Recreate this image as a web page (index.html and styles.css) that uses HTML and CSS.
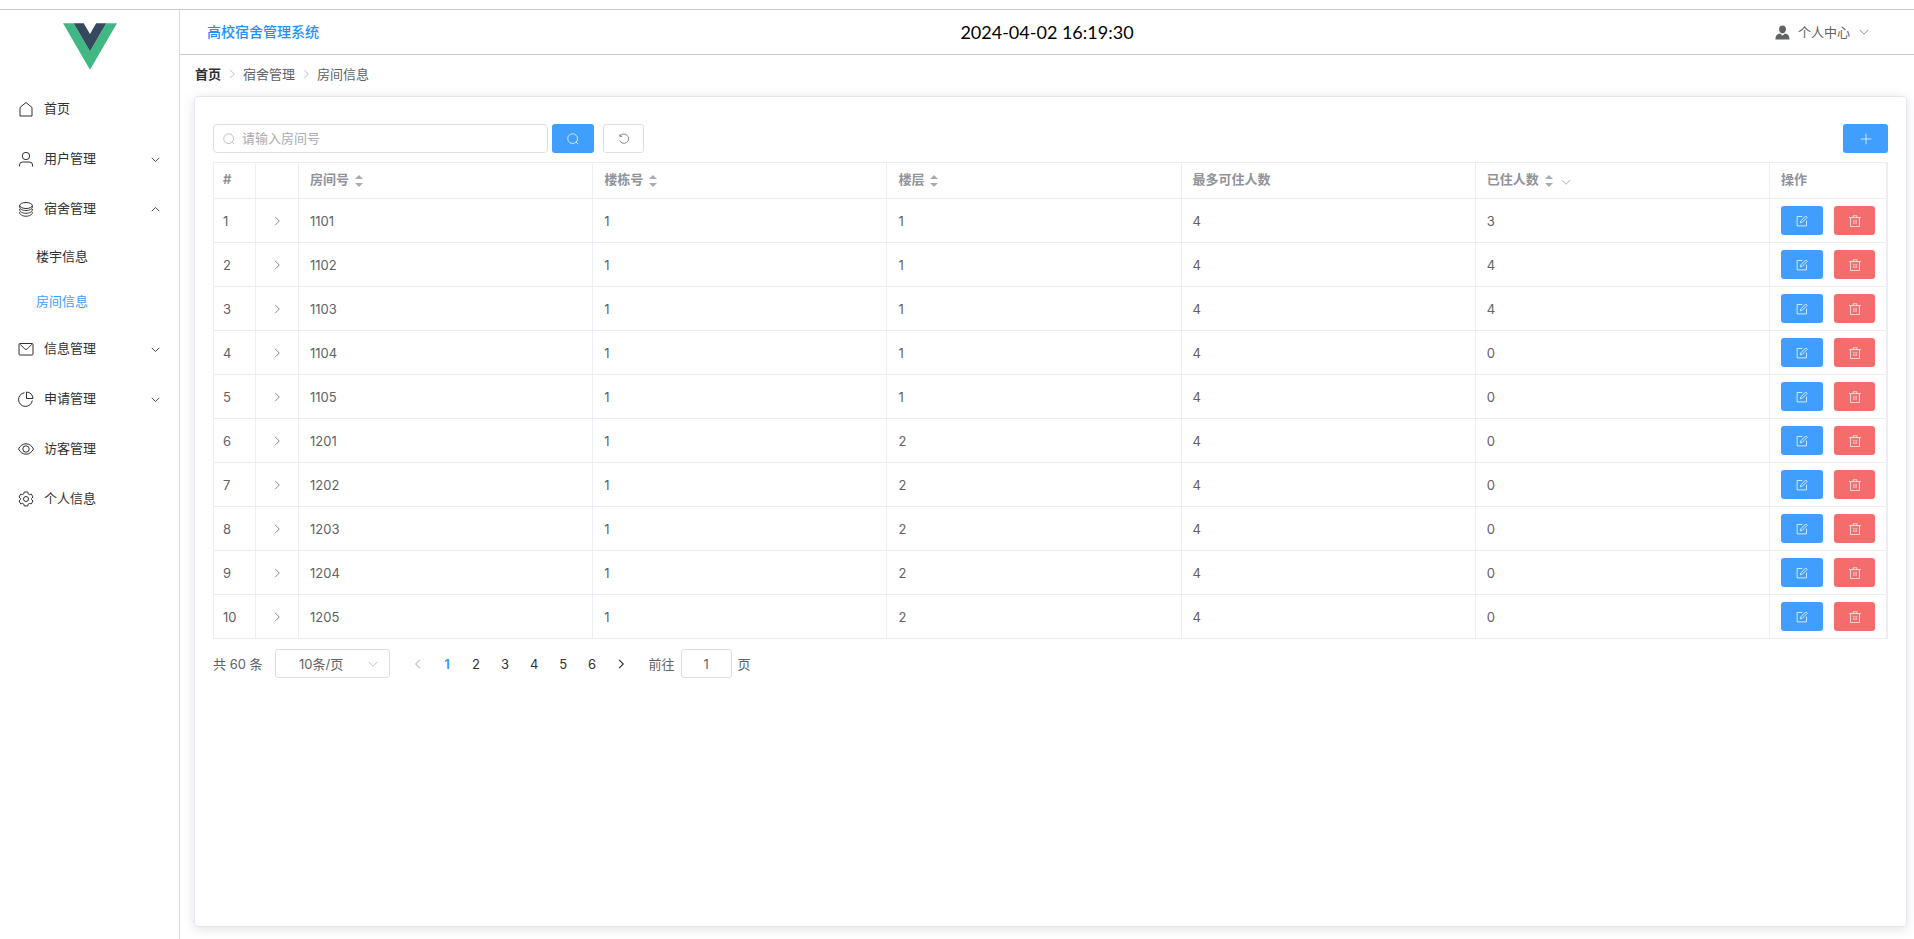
FILE: index.html
```html
<!DOCTYPE html>
<html lang="zh-CN">
<head>
<meta charset="utf-8">
<title>高校宿舍管理系统</title>
<link rel="stylesheet" href="styles.css">
</head>
<body>
<svg class="sprite" aria-hidden="true">
  <symbol id="i-home" viewBox="0 0 16 16"><path d="M2 15V6.500L8 1.500l6 5V15z"/></symbol>
  <symbol id="i-user" viewBox="0 0 16 16"><circle cx="8" cy="5" r="3.700"/><path d="M1.500 15.500v-1.500a3 3 0 0 1 3-3h7a3 3 0 0 1 3 3v1.500"/></symbol>
  <symbol id="i-coin" viewBox="0 0 16 16"><ellipse cx="8" cy="4.500" rx="6.300" ry="3"/><path d="M1.700 4.500v1.700c0 1.800 2.800 3.300 6.300 3.300s6.300-1.500 6.300-3.300V4.500M1.700 8v1c0 1.800 2.800 3.300 6.300 3.300s6.300-1.500 6.300-3.300V8M1.700 11v.800c0 1.800 2.800 3.400 6.300 3.400s6.300-1.600 6.300-3.400V11"/></symbol>
  <symbol id="i-mail" viewBox="0 0 16 16"><rect x="1" y="2.500" width="14" height="11.500" rx="1"/><path d="M2 3.200l4.600 4.600a2 2 0 0 0 2.800 0L14 3.200"/></symbol>
  <symbol id="i-pie" viewBox="0 0 16 16"><path d="M6.500 1.700a6.900 6.900 0 1 0 7.800 7.800"/><path d="M8.500 1v6.500H15A6.600 6.600 0 0 0 8.500 1z"/></symbol>
  <symbol id="i-eye" viewBox="0 0 16 16"><path d="M.500 8C2.300 4.600 4.900 2.800 8 2.800S13.700 4.600 15.500 8c-1.800 3.400-4.400 5.200-7.500 5.200S2.300 11.400.500 8z"/><circle cx="8" cy="8" r="3.200"/></symbol>
  <symbol id="i-gear" viewBox="0 0 16 16"><path d="M6.300 1h3.400l.5 1.900 1.200.7 1.900-.5L15 6l-1.400 1.400v1.200L15 10l-1.700 2.900-1.900-.5-1.200.7-.5 1.900H6.300l-.5-1.900-1.200-.7-1.900.5L1 10l1.400-1.400V7.400L1 6l1.700-2.900 1.900.5 1.200-.7z"/><circle cx="8" cy="8" r="2.500"/></symbol>
  <symbol id="i-down" viewBox="0 0 16 16"><path d="M2.500 5.500L8 11l5.500-5.500"/></symbol>
  <symbol id="i-up" viewBox="0 0 16 16"><path d="M2.500 10.500L8 5l5.500 5.500"/></symbol>
  <symbol id="i-right" viewBox="0 0 16 16"><path d="M5.500 2.500L11 8l-5.500 5.500"/></symbol>
  <symbol id="i-left" viewBox="0 0 16 16"><path d="M10.500 2.500L5 8l5.500 5.500"/></symbol>
  <symbol id="i-search" viewBox="0 0 16 16"><circle cx="7.500" cy="7.500" r="6.500"/><path d="M12 12l3 3"/></symbol>
  <symbol id="i-reset" viewBox="0 0 16 16"><path d="M2.500 4.500H5.500M2.500 4.500V1.500M2.500 4.500A6.200 6.200 0 1 1 2.200 10"/></symbol>
  <symbol id="i-plus" viewBox="0 0 16 16"><path d="M8 1v14M1 8h14"/></symbol>
  <symbol id="i-edit" viewBox="0 0 16 16"><path d="M8.500 2H1.500v12.500H14V7.500"/><path d="M13 1.300l1.900 1.900-6.500 6.500-2.500.6.600-2.500z"/></symbol>
  <symbol id="i-trash" viewBox="0 0 16 16"><path d="M0 3.500h16M2 3.500V15.300h12V3.500M5.500 3.500v-2.500h5v2.500M6.500 6.500v5.500M9.500 6.500v5.500"/></symbol>
  <symbol id="i-person" viewBox="0 0 16 16"><path d="M8 .5c2.300 0 3.700 1.700 3.700 4S10 9 8 9 4.300 6.800 4.300 4.500 5.700.5 8 .5zM5.500 9L8 11.500 10.500 9c3 .6 4.800 1.700 5 6.500H.5C.700 10.700 2.500 9.600 5.500 9z"/></symbol>
  <symbol id="i-sort" viewBox="0 0 8 12"><path d="M4 0l4 4H0zM4 12L0 8h8z"/></symbol>
</svg>

<div class="app">
  <aside class="sidebar">
    <svg class="logo" viewBox="0 0 256 221" role="img" aria-label="Vue"><path fill="#41b883" d="M204.800 0H256L128 220.800 0 0h50.560L128 133z"/><path fill="#34495e" d="M50.560 0L128 133.120 204.800 0h-47.360L128 51.200 97.920 0z"/></svg>
    <nav class="menu">
      <a class="item" href="#"><svg class="icon"><use href="#i-home"/></svg><span>首页</span></a>
      <a class="item" href="#"><svg class="icon"><use href="#i-user"/></svg><span>用户管理</span><svg class="icon small arrow"><use href="#i-down"/></svg></a>
      <a class="item" href="#"><svg class="icon"><use href="#i-coin"/></svg><span>宿舍管理</span><svg class="icon small arrow"><use href="#i-up"/></svg></a>
      <a class="item sub" href="#"><span>楼宇信息</span></a>
      <a class="item sub active" href="#"><span>房间信息</span></a>
      <a class="item" href="#"><svg class="icon"><use href="#i-mail"/></svg><span>信息管理</span><svg class="icon small arrow"><use href="#i-down"/></svg></a>
      <a class="item" href="#"><svg class="icon"><use href="#i-pie"/></svg><span>申请管理</span><svg class="icon small arrow"><use href="#i-down"/></svg></a>
      <a class="item" href="#"><svg class="icon"><use href="#i-eye"/></svg><span>访客管理</span></a>
      <a class="item" href="#"><svg class="icon"><use href="#i-gear"/></svg><span>个人信息</span></a>
    </nav>
  </aside>

  <div class="content">
    <header class="header">
      <div class="brand">高校宿舍管理系统</div>
      <time class="clock">2024-04-02 16:19:30</time>
      <button class="account" type="button"><svg class="icon solid"><use href="#i-person"/></svg><span>个人中心</span><svg class="icon small"><use href="#i-down"/></svg></button>
    </header>

    <nav class="crumbs">
      <a class="home" href="#">首页</a><svg class="icon small"><use href="#i-right"/></svg><span>宿舍管理</span><svg class="icon small"><use href="#i-right"/></svg><span>房间信息</span>
    </nav>

    <main class="card">
      <div class="toolbar">
        <div class="search"><svg class="icon small"><use href="#i-search"/></svg><input type="text" placeholder="请输入房间号" aria-label="房间号"></div>
        <button class="btn primary" type="button" aria-label="搜索"><svg class="icon small"><use href="#i-search"/></svg></button>
        <button class="btn plain" type="button" aria-label="重置"><svg class="icon small"><use href="#i-reset"/></svg></button>
        <button class="btn primary add" type="button" aria-label="新增"><svg class="icon small"><use href="#i-plus"/></svg></button>
      </div>

      <table class="rooms">
        <colgroup><col class="c-index"><col class="c-expand"><col><col><col><col><col><col class="c-ops"></colgroup>
        <thead>
          <tr>
            <th>#</th><th></th>
            <th>房间号<svg class="sort"><use href="#i-sort"/></svg></th>
            <th>楼栋号<svg class="sort"><use href="#i-sort"/></svg></th>
            <th>楼层<svg class="sort"><use href="#i-sort"/></svg></th>
            <th>最多可住人数</th>
            <th>已住人数<svg class="sort"><use href="#i-sort"/></svg><svg class="icon small filter"><use href="#i-down"/></svg></th>
            <th>操作</th>
          </tr>
        </thead>
        <tbody>
          <tr><td>1</td><td><svg class="icon small"><use href="#i-right"/></svg></td><td>1101</td><td>1</td><td>1</td><td>4</td><td>3</td><td><div class="ops"><button class="btn primary" type="button" aria-label="编辑"><svg class="icon small"><use href="#i-edit"/></svg></button><button class="btn danger" type="button" aria-label="删除"><svg class="icon small"><use href="#i-trash"/></svg></button></div></td></tr>
          <tr><td>2</td><td><svg class="icon small"><use href="#i-right"/></svg></td><td>1102</td><td>1</td><td>1</td><td>4</td><td>4</td><td><div class="ops"><button class="btn primary" type="button" aria-label="编辑"><svg class="icon small"><use href="#i-edit"/></svg></button><button class="btn danger" type="button" aria-label="删除"><svg class="icon small"><use href="#i-trash"/></svg></button></div></td></tr>
          <tr><td>3</td><td><svg class="icon small"><use href="#i-right"/></svg></td><td>1103</td><td>1</td><td>1</td><td>4</td><td>4</td><td><div class="ops"><button class="btn primary" type="button" aria-label="编辑"><svg class="icon small"><use href="#i-edit"/></svg></button><button class="btn danger" type="button" aria-label="删除"><svg class="icon small"><use href="#i-trash"/></svg></button></div></td></tr>
          <tr><td>4</td><td><svg class="icon small"><use href="#i-right"/></svg></td><td>1104</td><td>1</td><td>1</td><td>4</td><td>0</td><td><div class="ops"><button class="btn primary" type="button" aria-label="编辑"><svg class="icon small"><use href="#i-edit"/></svg></button><button class="btn danger" type="button" aria-label="删除"><svg class="icon small"><use href="#i-trash"/></svg></button></div></td></tr>
          <tr><td>5</td><td><svg class="icon small"><use href="#i-right"/></svg></td><td>1105</td><td>1</td><td>1</td><td>4</td><td>0</td><td><div class="ops"><button class="btn primary" type="button" aria-label="编辑"><svg class="icon small"><use href="#i-edit"/></svg></button><button class="btn danger" type="button" aria-label="删除"><svg class="icon small"><use href="#i-trash"/></svg></button></div></td></tr>
          <tr><td>6</td><td><svg class="icon small"><use href="#i-right"/></svg></td><td>1201</td><td>1</td><td>2</td><td>4</td><td>0</td><td><div class="ops"><button class="btn primary" type="button" aria-label="编辑"><svg class="icon small"><use href="#i-edit"/></svg></button><button class="btn danger" type="button" aria-label="删除"><svg class="icon small"><use href="#i-trash"/></svg></button></div></td></tr>
          <tr><td>7</td><td><svg class="icon small"><use href="#i-right"/></svg></td><td>1202</td><td>1</td><td>2</td><td>4</td><td>0</td><td><div class="ops"><button class="btn primary" type="button" aria-label="编辑"><svg class="icon small"><use href="#i-edit"/></svg></button><button class="btn danger" type="button" aria-label="删除"><svg class="icon small"><use href="#i-trash"/></svg></button></div></td></tr>
          <tr><td>8</td><td><svg class="icon small"><use href="#i-right"/></svg></td><td>1203</td><td>1</td><td>2</td><td>4</td><td>0</td><td><div class="ops"><button class="btn primary" type="button" aria-label="编辑"><svg class="icon small"><use href="#i-edit"/></svg></button><button class="btn danger" type="button" aria-label="删除"><svg class="icon small"><use href="#i-trash"/></svg></button></div></td></tr>
          <tr><td>9</td><td><svg class="icon small"><use href="#i-right"/></svg></td><td>1204</td><td>1</td><td>2</td><td>4</td><td>0</td><td><div class="ops"><button class="btn primary" type="button" aria-label="编辑"><svg class="icon small"><use href="#i-edit"/></svg></button><button class="btn danger" type="button" aria-label="删除"><svg class="icon small"><use href="#i-trash"/></svg></button></div></td></tr>
          <tr><td>10</td><td><svg class="icon small"><use href="#i-right"/></svg></td><td>1205</td><td>1</td><td>2</td><td>4</td><td>0</td><td><div class="ops"><button class="btn primary" type="button" aria-label="编辑"><svg class="icon small"><use href="#i-edit"/></svg></button><button class="btn danger" type="button" aria-label="删除"><svg class="icon small"><use href="#i-trash"/></svg></button></div></td></tr>
        </tbody>
      </table>

      <div class="pager">
        <span class="total">共 60 条</span>
        <div class="size"><select aria-label="每页条数"><option>10条/页</option></select><svg class="icon small"><use href="#i-down"/></svg></div>
        <div class="pages">
          <button type="button" disabled aria-label="上一页"><svg class="icon small"><use href="#i-left"/></svg></button>
          <button type="button" class="current">1</button>
          <button type="button">2</button>
          <button type="button">3</button>
          <button type="button">4</button>
          <button type="button">5</button>
          <button type="button">6</button>
          <button type="button" aria-label="下一页"><svg class="icon small"><use href="#i-right"/></svg></button>
        </div>
        <label class="jump"><span>前往</span><input type="text" value="1"><span>页</span></label>
      </div>
    </main>
  </div>
</div>
</body>
</html>
```

FILE: styles.css
```css
* { box-sizing: border-box; }
body {
  margin: 0;
  font: 13px/20px Inter, "Noto Sans CJK SC", sans-serif;
  color: #606266;
  background: #fff;
}
button, input, select { font: inherit; color: inherit; }
button { padding: 0; border: 0; background: none; }
a { color: inherit; text-decoration: none; }
.sprite { position: absolute; width: 0; height: 0; }

.icon {
  display: block;
  flex: none;
  width: 16px;
  height: 16px;
  fill: none;
  stroke: currentColor;
  stroke-width: 1;
}
.icon.small { width: 12px; height: 12px; }
.icon.solid { width: 15px; height: 15px; fill: currentColor; stroke: none; }

.app {
  display: flex;
  min-height: calc(100vh - 9px);
  margin-top: 9px;
  border-top: 1px solid #ccc;
}

.sidebar { flex: none; width: 180px; border-right: 1px solid #dcdcdc; color: #303133; }
.logo { display: block; width: 54px; height: 47px; margin: 13px auto 14px; }
.item {
  display: flex;
  align-items: center;
  height: 50px;
  padding: 0 18px;
  gap: 10px;
}
.item span { padding-bottom: 2px; }
.item .arrow { width: 11px; height: 11px; stroke-width: 1.3; margin-left: auto; }
.item.sub { height: 45px; padding-left: 36px; }
.item.active { color: #409eff; }

.content { flex: 1; min-width: 0; display: flex; flex-direction: column; }
.header {
  display: grid;
  grid-template-columns: 1fr auto 1fr;
  align-items: center;
  height: 45px;
  padding: 0 27px;
  border-bottom: 1px solid #ccc;
}
.brand { font-size: 14px; font-weight: 500; color: #1e90ff; }
.clock { font-family: Lato, sans-serif; font-size: 18px; color: #000; }
.account { display: flex; align-items: center; gap: 8px; justify-self: end; margin-right: 17px; }

.crumbs { display: flex; align-items: center; height: 41px; padding: 0 15px 4px; gap: 5px; }
.crumbs .home { font-weight: 700; color: #303133; }
.crumbs .icon { color: #a8abb2; }

.card {
  flex: 1;
  margin: 0 7px 12px 14px;
  padding: 27px 18px;
  border: 1px solid #e4e7ed;
  border-radius: 4px;
  box-shadow: 0 2px 12px rgba(0, 0, 0, 0.12);
}

.toolbar { display: flex; align-items: center; margin-bottom: 9px; }
.search {
  display: flex;
  align-items: center;
  gap: 7px;
  width: 20%;
  height: 29px;
  margin-right: 4px;
  padding: 0 9px;
  border: 1px solid #dcdfe6;
  border-radius: 4px;
  color: #a8abb2;
}
.search input { flex: 1; min-width: 0; padding: 0 0 2px; border: 0; outline: 0; background: none; }
.search input::placeholder { color: #a8abb2; }
.btn {
  display: flex;
  align-items: center;
  justify-content: center;
  width: 42px;
  height: 29px;
  border-radius: 3px;
  color: #fff;
}
.btn.primary { background: #409eff; }
.btn.danger { width: 41px; background: #f56c6c; }
.btn.plain { width: 41px; margin-left: 9px; border: 1px solid #dcdfe6; color: #606266; }
.btn.add { width: 45px; margin-left: auto; }

.rooms {
  width: 100%;
  table-layout: fixed;
  border-collapse: separate;
  border-spacing: 0;
  border: 1px solid #ebeef5;
  border-bottom: 0;
}
.rooms th, .rooms td {
  padding: 0 11px;
  text-align: left;
  border-right: 1px solid #ebeef5;
  border-bottom: 1px solid #ebeef5;
}
.rooms th { height: 36px; padding-bottom: 4px; color: #909399; font-weight: 700; }
.rooms td { height: 44px; }
.rooms th:first-child, .rooms td:first-child { padding-left: 9px; }
.c-index { width: 42px; }
.c-expand { width: 43px; }
.c-ops { width: 117px; }
.rooms td:nth-child(2) .icon { margin: 0 auto; }
.sort { display: inline-block; width: 8px; height: 12px; margin-left: 6px; vertical-align: -3px; fill: #a8abb2; }
.filter { display: inline-block; margin-left: 7px; vertical-align: -4px; }
.ops { display: flex; gap: 11px; }

.pager { display: flex; align-items: center; margin-top: 10px; }
.size { position: relative; width: 115px; margin-left: 12px; }
.size select {
  display: block;
  width: 100%;
  height: 29px;
  padding: 0 22px 0 0;
  border: 1px solid #dcdfe6;
  border-radius: 3px;
  background: #fff;
  appearance: none;
  text-align: center;
  text-align-last: center;
}
.size .icon { position: absolute; right: 11px; top: 9px; color: #a8abb2; pointer-events: none; }
.pages { display: flex; margin-left: 14px; color: #303133; }
.pages button { display: flex; align-items: center; justify-content: center; width: 29px; height: 29px; }
.pages .icon { stroke-width: 1.5; }
.pages button:disabled { color: #c0c4cc; }
.pages .current { color: #409eff; font-weight: 700; }
.jump { display: flex; align-items: center; gap: 6px; margin-left: 13px; }
.jump input {
  width: 51px;
  height: 29px;
  padding: 0;
  border: 1px solid #dcdfe6;
  border-radius: 3px;
  text-align: center;
}
```
